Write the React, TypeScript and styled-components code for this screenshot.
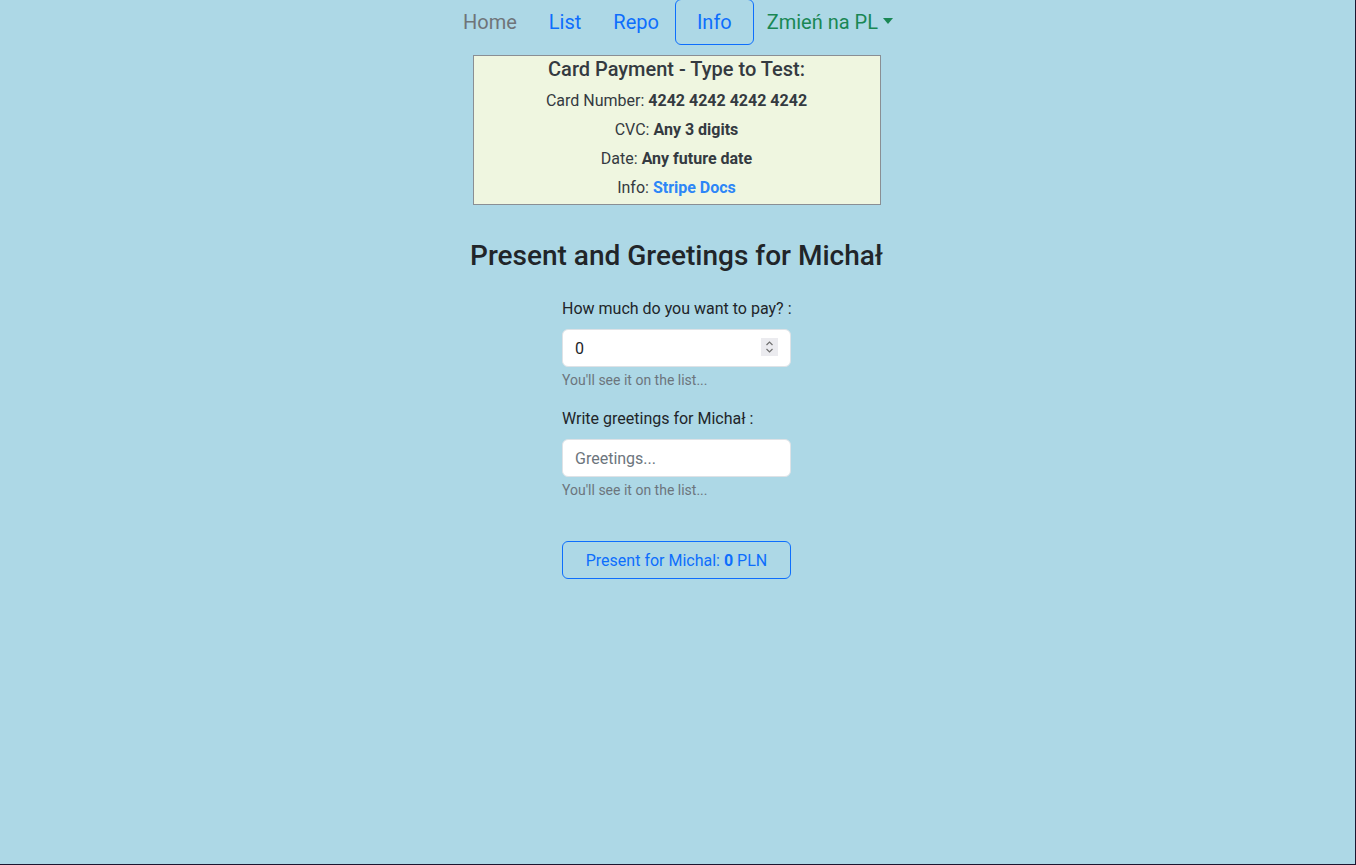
import styled, { createGlobalStyle } from "styled-components";

const GlobalStyle = createGlobalStyle`
  html {
    background: #1d1530;
  }
  body {
    margin: 0;
    font-family: Roboto, "Liberation Sans", Arial, sans-serif;
    font-size: 16px;
    line-height: 1.5;
    color: #212529;
  }
  * {
    box-sizing: border-box;
  }
`;

const Page = styled.div`
  width: calc(100vw - 1px);
  height: calc(100vh - 1px);
  padding-right: 2px;
  background: #add8e6;
  display: flex;
  flex-direction: column;
  align-items: center;
  overflow: hidden;
`;

const Nav = styled.nav`
  display: flex;
  align-items: center;
  margin: -1px 0 0 3px;
`;

const NavLink = styled.a<{ $tone?: "muted" | "primary" | "success"; $active?: boolean }>`
  display: flex;
  align-items: center;
  gap: 5px;
  font-size: 20px;
  line-height: 30px;
  padding: 7px ${(p) => (p.$active ? "21px" : "15px")};
  border: 1px solid ${(p) => (p.$active ? "#0d6efd" : "transparent")};
  border-radius: 6px;
  text-decoration: none;
  cursor: pointer;
  color: ${(p) =>
    p.$tone === "muted" ? "#6f7479" : p.$tone === "success" ? "#198754" : "#0d6efd"};
`;

const Caret = styled.span`
  display: inline-block;
  width: 0;
  height: 0;
  margin-top: -2px;
  border-left: 5.5px solid transparent;
  border-right: 5.5px solid transparent;
  border-top: 6px solid currentColor;
`;

const InfoBox = styled.section`
  margin-top: 10px;
  width: 408px;
  padding-top: 1px;
  background: #eff6e0;
  border: 1px solid #8a8f94;
  text-align: center;
  color: #343a40;
`;

const InfoTitle = styled.h5`
  margin: 0 0 8px;
  font-size: 20px;
  font-weight: 500;
  line-height: 24px;
`;

const InfoLine = styled.p`
  margin: 0 0 5px;
  line-height: 24px;
  &:last-child {
    margin-bottom: 4px;
  }
  b {
    font-weight: 700;
  }
  a {
    color: #2d86f7;
    font-weight: 700;
    text-decoration: none;
  }
`;

const Heading = styled.h3`
  margin: 34px 0 24px;
  font-size: 28px;
  font-weight: 500;
  line-height: 34px;
  color: #212529;
`;

const Form = styled.form`
  width: 229px;
  display: flex;
  flex-direction: column;
`;

const Field = styled.div`
  margin-bottom: 16px;
`;

const Label = styled.label`
  display: block;
  margin-bottom: 8px;
  line-height: 24px;
  white-space: nowrap;
`;

const InputWrap = styled.div`
  position: relative;
`;

const Input = styled.input`
  display: block;
  width: 100%;
  height: 38px;
  padding: 6px 12px;
  font-family: inherit;
  font-size: 16px;
  color: #212529;
  background: #fff;
  border: 1px solid #dee2e6;
  border-radius: 6px;
  outline: none;
  -moz-appearance: textfield;
  &::placeholder {
    color: #6c757d;
  }
  &::-webkit-inner-spin-button,
  &::-webkit-outer-spin-button {
    -webkit-appearance: none;
    margin: 0;
  }
`;

const Spinner = styled.span`
  position: absolute;
  right: 13px;
  top: 9px;
  width: 17px;
  height: 18px;
  background: #ebebef;
  display: flex;
  align-items: center;
  justify-content: center;
  pointer-events: none;
`;

const Help = styled.div`
  margin-top: 3px;
  font-size: 14px;
  line-height: 21px;
  color: #6c757d;
`;

const SubmitButton = styled.button`
  margin-top: 24px;
  width: 100%;
  height: 38px;
  font-family: inherit;
  font-size: 16px;
  color: #0d6efd;
  background: transparent;
  border: 1px solid #0d6efd;
  border-radius: 6px;
  cursor: pointer;
  b {
    font-weight: 700;
  }
`;

export default function App() {
  return (
    <>
      <GlobalStyle />
      <Page>
        <Nav>
          <NavLink $tone="muted">Home</NavLink>
          <NavLink>List</NavLink>
          <NavLink>Repo</NavLink>
          <NavLink $active>Info</NavLink>
          <NavLink $tone="success" style={{ paddingLeft: 12 }}>
            Zmień na PL <Caret />
          </NavLink>
        </Nav>
        <InfoBox>
          <InfoTitle>Card Payment - Type to Test:</InfoTitle>
          <InfoLine>
            Card Number: <b>4242 4242 4242 4242</b>
          </InfoLine>
          <InfoLine>
            CVC: <b>Any 3 digits</b>
          </InfoLine>
          <InfoLine>
            Date: <b>Any future date</b>
          </InfoLine>
          <InfoLine>
            Info: <a href="#">Stripe Docs</a>
          </InfoLine>
        </InfoBox>
        <Heading>Present and Greetings for Michał</Heading>
        <Form onSubmit={(e) => e.preventDefault()}>
          <Field>
            <Label htmlFor="amount">How much do you want to pay? :</Label>
            <InputWrap>
              <Input id="amount" type="number" defaultValue={0} />
              <Spinner>
                <svg width="9" height="14" viewBox="0 0 9 14" fill="none" stroke="#707070" strokeWidth="1.2">
                  <path d="M1.5 5 L4.5 2 L7.5 5" />
                  <path d="M1.5 9 L4.5 12 L7.5 9" />
                </svg>
              </Spinner>
            </InputWrap>
            <Help>You'll see it on the list...</Help>
          </Field>
          <Field>
            <Label htmlFor="greetings">Write greetings for Michał :</Label>
            <Input id="greetings" type="text" placeholder="Greetings..." />
            <Help>You'll see it on the list...</Help>
          </Field>
          <SubmitButton type="submit">
            Present for Michal: <b>0</b> PLN
          </SubmitButton>
        </Form>
      </Page>
    </>
  );
}
